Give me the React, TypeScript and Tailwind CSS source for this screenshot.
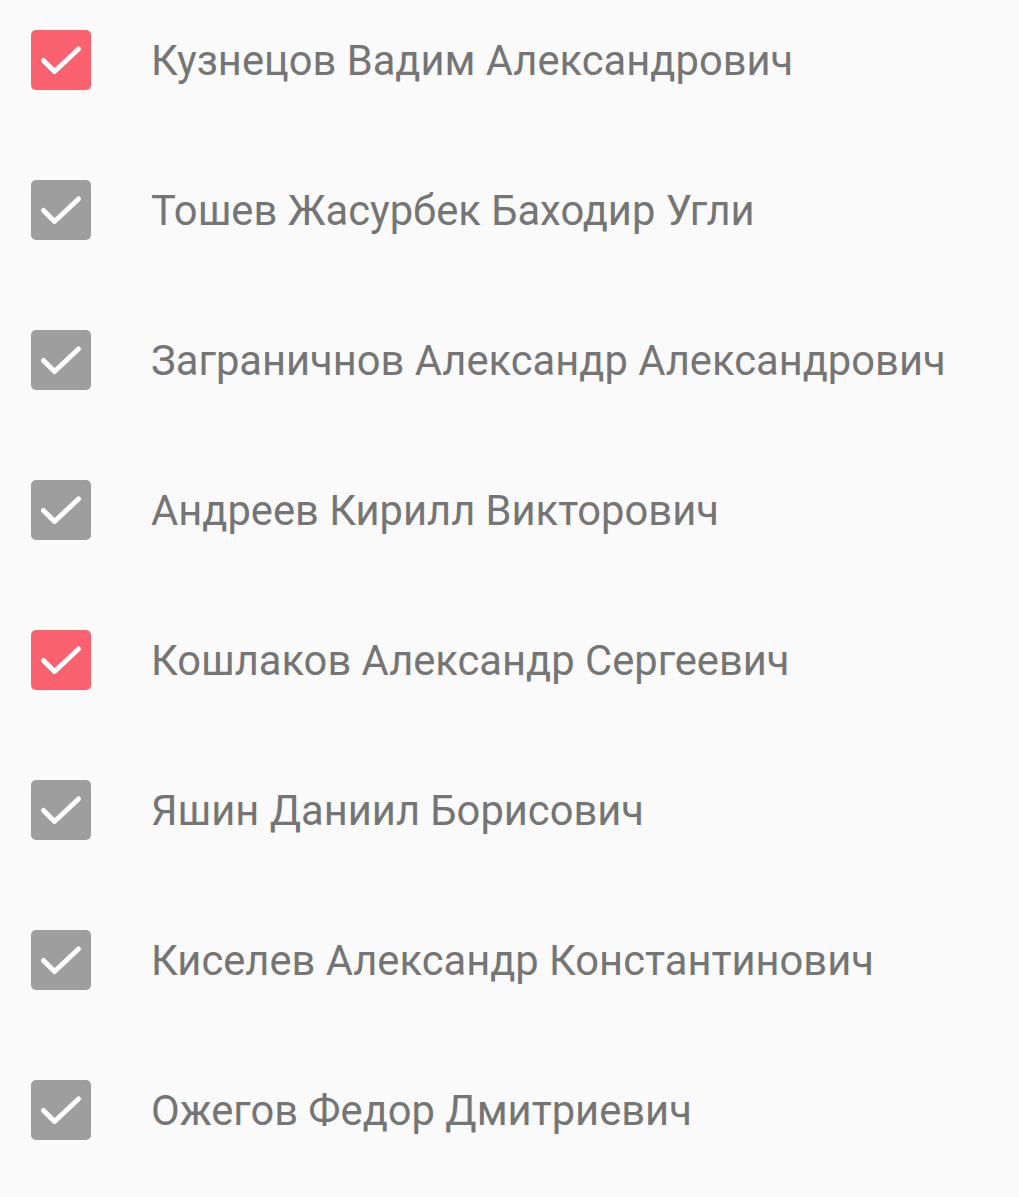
import React from 'react';

type Person = { name: string; checked: 'red' | 'grey' };

const people: Person[] = [
  { name: 'Кузнецов Вадим Александрович', checked: 'red' },
  { name: 'Тошев Жасурбек Баходир Угли', checked: 'grey' },
  { name: 'Заграничнов Александр Александрович', checked: 'grey' },
  { name: 'Андреев Кирилл Викторович', checked: 'grey' },
  { name: 'Кошлаков Александр Сергеевич', checked: 'red' },
  { name: 'Яшин Даниил Борисович', checked: 'grey' },
  { name: 'Киселев Александр Константинович', checked: 'grey' },
  { name: 'Ожегов Федор Дмитриевич', checked: 'grey' },
];

const CheckBox: React.FC<{ tone: 'red' | 'grey' }> = ({ tone }) => (
  <div
    className={`w-[60px] h-[60px] rounded-[5px] shrink-0 flex items-center justify-center ${
      tone === 'red' ? 'bg-[#f9616e]' : 'bg-[#9e9e9e]'
    }`}
  >
    <svg width="60" height="60" viewBox="0 0 60 60" fill="none">
      <path d="M12.5 30.5 L23.5 41.5 L47.5 19" stroke="white" strokeWidth={5} strokeLinecap="round" strokeLinejoin="round" />
    </svg>
  </div>
);

const App: React.FC = () => {
  return (
    <div className="min-h-screen w-full bg-[#fafafa] pt-[30px] font-['Roboto',sans-serif]">
      <div className="flex flex-col gap-[90px]">
        {people.map(p => (
          <div key={p.name} className="flex items-center h-[60px] pl-[31px]">
            <CheckBox tone={p.checked} />
            <span className="ml-[60px] mt-[2px] text-[41.7px] leading-none text-[#757575] whitespace-nowrap">{p.name}</span>
          </div>
        ))}
      </div>
    </div>
  );
};

export default App;
